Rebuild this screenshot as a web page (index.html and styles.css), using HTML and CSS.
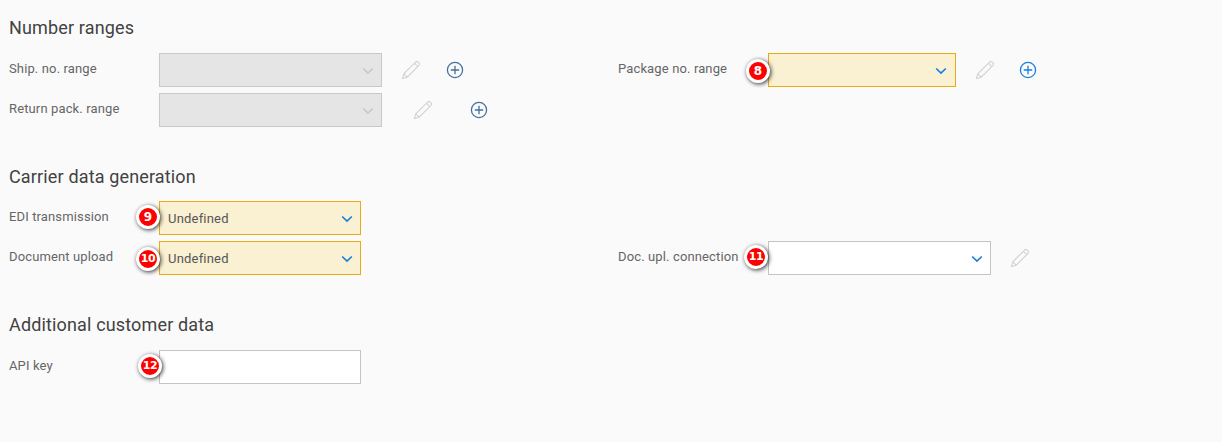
FILE: index.html
```html
<!DOCTYPE html>
<html>
<head>
  <title>Carrier settings</title>
  <link rel="stylesheet" href="styles.css">
</head>
<body>
  <svg class="icon-defs" width="0" height="0">
    <symbol id="chevron" viewBox="0 0 12 8">
      <path d="M1.2 1.5 L6 6 L10.8 1.5" fill="none" stroke="currentColor" stroke-width="1.7"/>
    </symbol>
    <symbol id="pencil" viewBox="0 0 20 20">
      <path d="M1.5 18.5 L2.8 13.8 L14.8 1.8 Q15.8 1 16.8 1.8 L18.2 3.2 Q19 4.2 18.2 5.2 L6.2 17.2 Z M2.8 13.8 L6.2 17.2 M13.4 3.2 L16.8 6.6" fill="none" stroke="currentColor" stroke-width="1.1"/>
    </symbol>
    <symbol id="plus" viewBox="0 0 18 18">
      <circle cx="9" cy="9" r="7.6" fill="none" stroke="currentColor" stroke-width="1.3"/>
      <path d="M9 4.8 V13.2 M4.8 9 H13.2" fill="none" stroke="currentColor" stroke-width="1.3"/>
    </symbol>
  </svg>

  <div class="container">
    <h2 class="section-title first">Number ranges</h2>
    <div class="form-grid">
      <div class="field">
        <label class="field-label">Ship. no. range</label>
        <div class="select disabled wide"><svg class="chevron"><use href="#chevron"/></svg></div>
        <svg class="icon pencil"><use href="#pencil"/></svg>
        <svg class="icon plus muted"><use href="#plus"/></svg>
      </div>
      <div class="field">
        <label class="field-label">Package no. range</label>
        <div class="select required package">
          <span class="badge badge-8">8</span>
          <svg class="chevron"><use href="#chevron"/></svg>
        </div>
        <svg class="icon pencil"><use href="#pencil"/></svg>
        <svg class="icon plus"><use href="#plus"/></svg>
      </div>
      <div class="field">
        <label class="field-label">Return pack. range</label>
        <div class="select disabled wide"><svg class="chevron"><use href="#chevron"/></svg></div>
        <svg class="icon pencil shifted"><use href="#pencil"/></svg>
        <svg class="icon plus muted shifted-more"><use href="#plus"/></svg>
      </div>
    </div>

    <h2 class="section-title tight">Carrier data generation</h2>
    <div class="form-grid">
      <div class="field">
        <label class="field-label">EDI transmission</label>
        <div class="select required">
          <span class="badge badge-9">9</span>
          <span class="select-value">Undefined</span>
          <svg class="chevron"><use href="#chevron"/></svg>
        </div>
      </div>
      <div class="field"></div>
      <div class="field">
        <label class="field-label">Document upload</label>
        <div class="select required">
          <span class="badge badge-10">10</span>
          <span class="select-value">Undefined</span>
          <svg class="chevron"><use href="#chevron"/></svg>
        </div>
      </div>
      <div class="field">
        <label class="field-label">Doc. upl. connection</label>
        <div class="select connection">
          <span class="badge badge-11">11</span>
          <svg class="chevron"><use href="#chevron"/></svg>
        </div>
        <svg class="icon pencil"><use href="#pencil"/></svg>
      </div>
    </div>

    <h2 class="section-title">Additional customer data</h2>
    <div class="form-grid">
      <div class="field">
        <label class="field-label">API key</label>
        <div class="select">
          <span class="badge badge-12">12</span>
        </div>
      </div>
    </div>
  </div>
</body>
</html>
```

FILE: styles.css
```css
body {
  font-family: Roboto, "Liberation Sans", sans-serif;
  background-color: #fafafa;
  color: #666;
  margin: 0;
  padding: 0;
}
.icon-defs {
  position: absolute;
}
.container {
  padding: 0 0 0 9px;
}
.section-title {
  font-size: 18px;
  font-weight: 400;
  line-height: 24px;
  letter-spacing: 0.15px;
  color: #424242;
  margin: 38px 0 13px;
}
.section-title.tight {
  margin-bottom: 12px;
}
.section-title.first {
  margin-top: 0;
  padding-top: 16px;
}
.form-grid {
  display: grid;
  grid-template-columns: 609px 1fr;
  row-gap: 6px;
}
.field {
  display: flex;
  align-items: center;
  height: 34px;
}
.field-label {
  width: 150px;
  flex-shrink: 0;
  font-size: 13px;
  letter-spacing: 0.13px;
  margin-top: -3px;
}
.select {
  position: relative;
  box-sizing: border-box;
  display: flex;
  align-items: center;
  width: 202px;
  height: 34px;
  padding: 0 8px;
  border: 1px solid #c4c4c4;
  background-color: #fff;
  font-size: 13px;
}
.select.wide {
  width: 223px;
}
.select.package {
  width: 188px;
}
.select.connection {
  width: 223px;
}
.select.disabled {
  background-color: #e5e5e5;
  border-color: #c9c9c9;
}
.select.required {
  background-color: #faf0d2;
  border-color: #e6ac13;
}
.select-value {
  color: #555;
  letter-spacing: 0.2px;
}
.chevron {
  position: absolute;
  right: 7px;
  top: 13px;
  width: 12px;
  height: 8px;
  color: #1a7fdc;
}
.package .chevron {
  right: 8px;
}
.disabled .chevron {
  color: #c8c8c8;
}
.icon {
  flex-shrink: 0;
}
.pencil {
  width: 20px;
  height: 20px;
  margin-left: 19px;
  color: #d2d2d2;
}
.plus {
  width: 18px;
  height: 18px;
  margin-left: 24px;
  color: #1a7fdc;
}
.plus.muted {
  margin-left: 25px;
  color: #44709f;
}
.pencil.shifted {
  margin-left: 31px;
}
.plus.shifted-more {
  margin-left: 37px;
}
.badge {
  position: absolute;
  box-sizing: border-box;
  width: 24px;
  height: 24px;
  border: 3px solid #fff;
  border-radius: 50%;
  background-color: #f00;
  box-shadow: 1px 1px 4px rgba(0, 0, 0, 0.8);
  color: #fff;
  font-family: "DejaVu Sans", sans-serif;
  font-size: 12px;
  font-weight: 700;
  line-height: 18px;
  text-align: center;
}
.badge-8 {
  left: -23px;
  top: 5px;
}
.badge-9 {
  left: -24px;
  top: 3px;
}
.badge-10 {
  left: -24px;
  top: 5px;
  font-size: 11px;
  letter-spacing: -0.5px;
}
.badge-11 {
  left: -25px;
  top: 3px;
  font-size: 11px;
  letter-spacing: -0.5px;
}
.badge-12 {
  left: -22px;
  top: 3px;
  font-size: 11px;
  letter-spacing: -0.5px;
}
```
